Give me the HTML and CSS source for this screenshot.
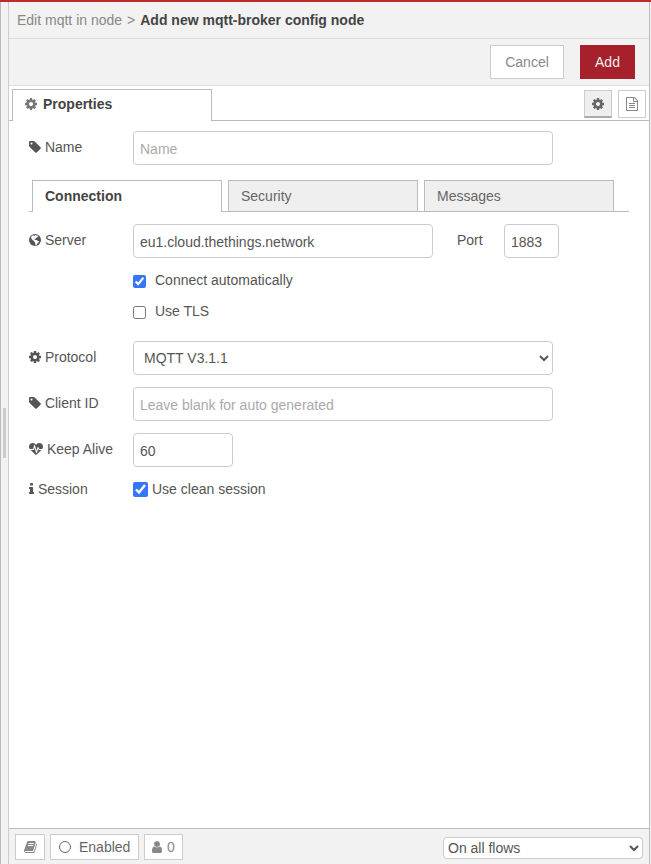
FILE: index.html
```html
<!DOCTYPE html>
<html lang="en">
<head>
<meta charset="utf-8">
<title>Edit mqtt in node</title>
<link rel="stylesheet" href="styles.css">
</head>
<body>
<svg class="sprite" width="0" height="0" aria-hidden="true">
  <symbol id="cog" viewBox="128 0 1536 1792"><path d="M1152 896q0-106-75-181t-181-75-181 75-75 181 75 181 181 75 181-75 75-181zm512-109v222q0 12-8 23t-20 13l-185 28q-19 54-39 91 35 50 107 138 10 12 10 25t-9 23q-27 37-99 108t-94 71q-12 0-26-9l-138-108q-44 23-91 38-16 136-29 186-7 28-36 28h-222q-14 0-24.500-8.500t-11.500-21.500l-28-184q-49-16-90-37l-141 107q-10 9-25 9-14 0-25-11-126-114-165-168-7-10-7-23 0-12 8-23 15-21 51-66.500t54-70.500q-27-50-41-99l-183-27q-13-2-21-12.500t-8-23.500v-222q0-12 8-23t19-13l186-28q14-46 39-92-40-57-107-138-10-12-10-24 0-10 9-23 26-36 98.500-107.500t94.500-71.500q13 0 26 10l138 107q44-23 91-38 16-136 29-186 7-28 36-28h222q14 0 24.500 8.500t11.500 21.500l28 184q49 16 90 37l142-107q9-9 24-9 13 0 25 10 129 119 165 170 7 8 7 22 0 12-8 23-15 21-51 66.500t-54 70.500q26 50 41 98l183 28q13 2 21 12.500t8 23.500z"/></symbol>
  <symbol id="tag" viewBox="128 0 1536 1792"><path d="M576 448q0-53-37.500-90.500t-90.500-37.500-90.500 37.500-37.500 90.500 37.500 90.500 90.500 37.500 90.500-37.500 37.500-90.500zm1067 576q0 53-37 90l-491 492q-39 37-91 37-53 0-90-37l-715-716q-38-37-64.500-101t-26.500-117v-416q0-52 38-90t90-38h416q53 0 117 26.500t102 64.500l715 714q37 39 37 91z"/></symbol>
  <symbol id="doc" viewBox="128 0 1536 1792"><path d="M1596 380q28 28 48 76t20 88v1152q0 40-28 68t-68 28h-1344q-40 0-68-28t-28-68v-1600q0-40 28-68t68-28h896q40 0 88 20t76 48zm-444-244v376h376q-10-29-22-41l-313-313q-12-12-41-22zm384 1528v-1024h-416q-40 0-68-28t-28-68v-416h-768v1536h1280zm-1024-864q0-14 9-23t23-9h704q14 0 23 9t9 23v64q0 14-9 23t-23 9h-704q-14 0-23-9t-9-23v-64zm736 224q14 0 23 9t9 23v64q0 14-9 23t-23 9h-704q-14 0-23-9t-9-23v-64q0-14 9-23t23-9h704zm0 256q14 0 23 9t9 23v64q0 14-9 23t-23 9h-704q-14 0-23-9t-9-23v-64q0-14 9-23t23-9h704z"/></symbol>
  <symbol id="globe" viewBox="128 0 1536 1792"><circle cx="896" cy="896" r="768"/><path fill="#fff" d="M850 250l190 10 60 90 130-40 90 110-110 60-40 120-130 20-60 110-110-20-20 130 110 70 130-20 120 110 200 70-60 160-150 90-80 190-150 90-40-200-30-170-110-100 20-120-160-60-130-110-100-170-30-150 140-180 150-60 110 90 110-50z"/></symbol>
  <symbol id="heartbeat" viewBox="0 0 1792 1792"><path d="M1280 1024h305q-5 6-10 10.500t-9 7.500l-3 4-623 600q-18 18-44 18t-44-18l-624-602q-5-2-21-20h369q22 0 39.500-13.500t22.500-34.500l70-281 190 667q6 20 23 33t39 13q21 0 38-13t23-33l146-485 56 112q18 35 57 35zm512-428q0 145-103 300h-369l-111-221q-8-17-25.500-27t-36.500-8q-45 5-56 46l-129 430-196-686q-6-20-23.500-33t-39.500-13-39 13.500-22 34.500l-116 464h-423q-103-155-103-300 0-220 127-344t351-124q62 0 126.500 21.500t120 58 95.500 68.500 76 68q36-36 76-68t95.500-68.500 120-58 126.500-21.500q224 0 351 124t127 344z"/></symbol>
  <symbol id="info" viewBox="576 0 640 1792"><path d="M1216 1344v128q0 26-19 45t-45 19h-512q-26 0-45-19t-19-45v-128q0-26 19-45t45-19h64v-384h-64q-26 0-45-19t-19-45v-128q0-26 19-45t45-19h384q26 0 45 19t19 45v576h64q26 0 45 19t19 45zm-128-1152v192q0 26-19 45t-45 19h-256q-26 0-45-19t-19-45v-192q0-26 19-45t45-19h256q26 0 45 19t19 45z"/></symbol>
  <symbol id="user" viewBox="256 0 1280 1792"><path d="M1536 1399q0 109-62.500 187t-150.500 78h-854q-88 0-150.500-78t-62.500-187q0-85 8.500-160.500t31.500-152 58.500-131 94-89 134.500-34.500q131 128 313 128t313-128q76 0 134.500 34.500t94 89 58.500 131 31.500 152 8.500 160.500zm-256-887q0 159-112.500 271.500t-271.500 112.500-271.500-112.500-112.500-271.500 112.500-271.500 271.500-112.500 271.500 112.500 112.500 271.500z"/></symbol>
  <symbol id="book" viewBox="64 0 1664 1792"><path d="M1703 478q40 57 18 129l-275 906q-19 64-76.500 107.500t-122.500 43.500h-923q-77 0-148.500-53.500t-99.500-131.500q-24-67-2-127 0-4 3-27t4-37q1-8-3-21.500t-3-19.500q2-11 8-21t16.500-23.500 16.500-23.500q23-38 45-91.500t30-91.500q3-10 .5-30t-.5-28q3-11 17-28t17-23q21-36 42-92t25-90q1-9-2.500-32t.5-28q4-13 22-30.500t22-22.500q19-26 42.500-84.500t27.500-96.500q1-8-3-25.500t-2-26.500q2-8 9-18t18-23 17-21q8-12 16.500-30.500t15-35 16-36 19.500-32 26.500-23.500 36-11.500 47.500 5.500l-1 3q38-9 51-9h761q74 0 114 56t18 130l-274 906q-36 119-71.500 153.500t-128.500 34.500h-869q-27 0-38 15-11 16-1 43 24 70 144 70h923q29 0 56-15.500t35-41.500l300-987q7-22 5-57 38 15 59 43zm-1064 2q-4 13 2 22.500t20 9.500h608q13 0 25.500-9.500t16.500-22.500l21-64q4-13-2-22.500t-20-9.500h-608q-13 0-25.500 9.500t-16.500 22.500zm-83 256q-4 13 2 22.500t20 9.500h608q13 0 25.500-9.500t16.500-22.500l21-64q4-13-2-22.500t-20-9.500h-608q-13 0-25.500 9.500t-16.500 22.500z"/></symbol>
</svg>
<div class="tray">
  <div class="resize"><div class="grip"></div></div>
  <main class="panel">
    <header class="header">Edit mqtt in node<span class="sep">&gt;</span><b>Add new mqtt-broker config node</b></header>
    <div class="toolbar">
      <button class="btn">Cancel</button>
      <button class="btn primary">Add</button>
    </div>
    <nav class="tabs">
      <div class="tab"><svg class="icon w12"><use href="#cog"/></svg><b>Properties</b></div>
      <button class="tool selected"><svg class="icon w12"><use href="#cog"/></svg></button>
      <button class="tool"><svg class="icon w12"><use href="#doc"/></svg></button>
    </nav>
    <form class="form">
      <div class="row">
        <label class="label"><svg class="icon w12"><use href="#tag"/></svg> Name</label>
        <input class="field" type="text" placeholder="Name">
      </div>
      <div class="subtabs">
        <div class="subtab active">Connection</div>
        <div class="subtab">Security</div>
        <div class="subtab">Messages</div>
      </div>
      <div class="row">
        <label class="label"><svg class="icon w12"><use href="#globe"/></svg> Server</label>
        <input class="field server" type="text" value="eu1.cloud.thethings.network">
        <label class="portlabel">Port</label>
        <input class="field port" type="text" value="1883">
      </div>
      <div class="checks">
        <label class="check"><input type="checkbox" checked>Connect automatically</label>
        <label class="check"><input type="checkbox">Use TLS</label>
      </div>
      <div class="row">
        <label class="label"><svg class="icon w12"><use href="#cog"/></svg> Protocol</label>
        <select class="field"><option>MQTT V3.1.1</option></select>
      </div>
      <div class="row">
        <label class="label"><svg class="icon w12"><use href="#tag"/></svg> Client ID</label>
        <input class="field" type="text" placeholder="Leave blank for auto generated">
      </div>
      <div class="row">
        <label class="label"><svg class="icon w14"><use href="#heartbeat"/></svg> Keep Alive</label>
        <input class="field keep" type="text" value="60">
      </div>
      <div class="row session">
        <label class="label"><svg class="icon w5"><use href="#info"/></svg> Session</label>
        <label class="check"><input type="checkbox" checked>Use clean session</label>
      </div>
    </form>
    <footer class="footer">
      <button class="foot lib"><svg class="icon w13"><use href="#book"/></svg></button>
      <button class="foot enabled"><span class="ring"></span>Enabled</button>
      <button class="foot users"><svg class="icon w10"><use href="#user"/></svg>0</button>
      <select class="scope"><option>On all flows</option></select>
    </footer>
  </main>
</div>
</body>
</html>
```
FILE: styles.css
```css
* { box-sizing: border-box; }
body {
  margin: 0;
  height: 864px;
  overflow: hidden;
  background: #f2f2f2;
  border-top: 2px solid #bd2c27;
  font: 14px/20px "Liberation Sans", Arial, sans-serif;
  color: #555;
}
button, input, select { font: inherit; color: inherit; margin: 0; }
.sprite { position: absolute; }
.icon { height: 14px; fill: currentColor; vertical-align: -2px; flex: none; }
.w5 { width: 5px; }
.w10 { width: 10px; }
.w12 { width: 12px; }
.w13 { width: 13px; }
.w14 { width: 14px; }

.tray { display: flex; height: 862px; border-left: 1px solid #bbb; }
.resize { width: 7px; padding: 406px 0 0 2px; }
.grip { width: 3px; height: 50px; background: #ccc; }
.panel {
  width: 642px;
  display: flex;
  flex-direction: column;
  border: solid #bbb;
  border-width: 0 1px;
  border-left-color: #ccc;
  background: #fff;
}
.header {
  height: 37px;
  padding: 8px 8px 0;
  background: #f2f2f2;
  border-bottom: 1px solid #ddd;
  color: #888;
}
.header b, .tab b { color: #444; }
.sep { margin: 0 5px; }
.toolbar {
  height: 47px;
  padding: 6px 14px 0 0;
  display: flex;
  justify-content: flex-end;
  gap: 16px;
  background: #f2f2f2;
  border-bottom: 1px solid #ddd;
}
.btn {
  width: 74px;
  height: 34px;
  padding: 0;
  background: #fff;
  border: 1px solid #ccc;
  color: #888;
}
.primary { width: 55px; background: #a6212b; border-color: #a6212b; color: #eee; }
.tabs {
  height: 35px;
  padding: 3px 3px 0;
  display: flex;
  gap: 6px;
  border-bottom: 1px solid #bbb;
}
.tab {
  width: 200px;
  height: 32px;
  margin-right: auto;
  padding: 4px 12px;
  background: #fff;
  border: 1px solid #bbb;
  border-bottom: 0;
  color: #777;
}
.tab .icon { margin-right: 6px; }
.tool {
  width: 28px;
  height: 28px;
  margin-top: 1px;
  padding: 0;
  display: flex;
  align-items: center;
  justify-content: center;
  background: #fff;
  border: 1px solid #ccc;
  color: #888;
}
.selected { background: #efefef; border-bottom: 2px solid #aaa; color: #666; }

.form { flex: 1; padding: 10px 20px 0; }
.row { display: flex; height: 34px; margin-bottom: 12px; }
.label { width: 104px; padding-top: 6px; white-space: pre; }
.field {
  width: 420px;
  height: 34px;
  padding: 2px 6px 0;
  background: #fff;
  border: 1px solid #ccc;
  border-radius: 4px;
  outline: 0;
}
select.field { padding: 0 6px; }
.field::placeholder { color: #aaa; opacity: 1; }
.server { width: 300px; }
.portlabel { width: 71px; padding: 6px 0 0 24px; }
.port { width: 55px; }
.keep { width: 100px; }
.subtabs {
  height: 32px;
  width: 600px;
  margin: 15px 0 12px;
  padding-left: 3px;
  display: flex;
  gap: 6px;
  border-bottom: 1px solid #bbb;
}
.subtab {
  width: 190px;
  height: 31px;
  padding: 5px 12px;
  background: #efefef;
  border: 1px solid #bbb;
  border-bottom: 0;
  color: #666;
}
.subtab.active { height: 32px; background: #fff; color: #444; font-weight: bold; }
.check { display: flex; align-items: center; height: 20px; }
.check input { width: 13px; height: 13px; margin-right: 9px; accent-color: #3875fa; position: relative; top: 1px; }
.checks { padding-left: 104px; height: 71px; display: grid; row-gap: 11px; align-content: start; }
.session { margin-top: -6px; }
.session .check { margin-top: 6px; }
.session .check input { width: 15px; height: 15px; margin-right: 4px; top: 0; }

.footer {
  height: 36px;
  padding: 5px 6px 0;
  display: flex;
  gap: 5px;
  background: #f2f2f2;
  border-top: 1px solid #bbb;
}
.foot {
  height: 26px;
  padding: 0 7px;
  display: flex;
  align-items: center;
  background: #fff;
  border: 1px solid #ccc;
  color: #888;
}
.lib { width: 30px; justify-content: center; }
.enabled { width: 89px; color: #666; }
.ring { width: 12px; height: 12px; margin: 0 8px 0 1px; border: 1px solid #666; border-radius: 50%; }
.users { width: 39px; gap: 5px; }
.scope {
  width: 200px;
  height: 22px;
  margin: 3px 0 0 auto;
  background: #fff;
  border: 1px solid #ccc;
  border-radius: 4px;
}
```
